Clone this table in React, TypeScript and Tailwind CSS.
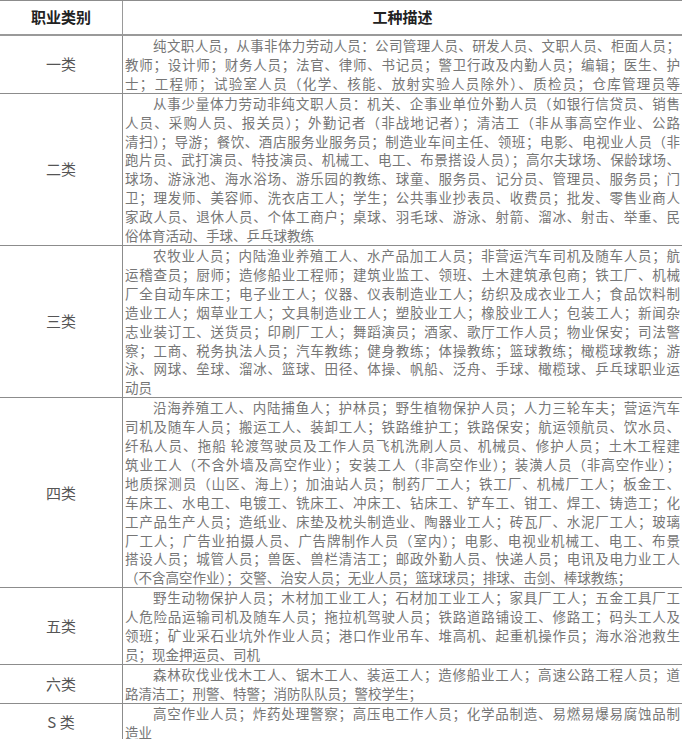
const rows: { label: string; lines: string[]; lastFull?: boolean }[] = [
  {
    label: "一类",
    lastFull: true,
    lines: [
      "纯文职人员，从事非体力劳动人员：公司管理人员、研发人员、文职人员、柜面人员；",
      "教师；设计师；财务人员；法官、律师、书记员；警卫行政及内勤人员；编辑；医生、护",
      "士；工程师；试验室人员（化学、核能、放射实验人员除外）、质检员；仓库管理员等",
    ],
  },
  {
    label: "二类",
    lines: [
      "从事少量体力劳动非纯文职人员：机关、企事业单位外勤人员（如银行信贷员、销售",
      "人员、采购人员、报关员）；外勤记者（非战地记者）；清洁工（非从事高空作业、公路",
      "清扫）；导游；餐饮、酒店服务业服务员；制造业车间主任、领班；电影、电视业人员（非",
      "跑片员、武打演员、特技演员、机械工、电工、布景搭设人员）；高尔夫球场、保龄球场、",
      "球场、游泳池、海水浴场、游乐园的教练、球童、服务员、记分员、管理员、服务员；门",
      "卫；理发师、美容师、洗衣店工人；学生；公共事业抄表员、收费员；批发、零售业商人",
      "家政人员、退休人员、个体工商户；桌球、羽毛球、游泳、射箭、溜冰、射击、举重、民",
      "俗体育活动、手球、乒乓球教练",
    ],
  },
  {
    label: "三类",
    lines: [
      "农牧业人员；内陆渔业养殖工人、水产品加工人员；非营运汽车司机及随车人员；航",
      "运稽查员；厨师；造修船业工程师；建筑业监工、领班、土木建筑承包商；铁工厂、机械",
      "厂全自动车床工；电子业工人；仪器、仪表制造业工人；纺织及成衣业工人；食品饮料制",
      "造业工人；烟草业工人；文具制造业工人；塑胶业工人；橡胶业工人；包装工人；新闻杂",
      "志业装订工、送货员；印刷厂工人；舞蹈演员；酒家、歌厅工作人员；物业保安；司法警",
      "察；工商、税务执法人员；汽车教练；健身教练；体操教练；篮球教练；橄榄球教练；游",
      "泳、网球、垒球、溜冰、篮球、田径、体操、帆船、泛舟、手球、橄榄球、乒乓球职业运",
      "动员",
    ],
  },
  {
    label: "四类",
    lines: [
      "沿海养殖工人、内陆捕鱼人；护林员；野生植物保护人员；人力三轮车夫；营运汽车",
      "司机及随车人员；搬运工人、装卸工人；铁路维护工；铁路保安；航运领航员、饮水员、",
      "纤私人员、拖船 轮渡驾驶员及工作人员飞机洗刷人员、机械员、修护人员；土木工程建",
      "筑业工人（不含外墙及高空作业）；安装工人（非高空作业）；装潢人员（非高空作业）；",
      "地质探测员（山区、海上）；加油站人员；制药厂工人；铁工厂、机械厂工人；板金工、",
      "车床工、水电工、电镀工、铣床工、冲床工、钻床工、铲车工、钳工、焊工、铸造工；化",
      "工产品生产人员；造纸业、床垫及枕头制造业、陶器业工人；砖瓦厂、水泥厂工人；玻璃",
      "厂工人；广告业拍摄人员、广告牌制作人员（室内）；电影、电视业机械工、电工、布景",
      "搭设人员；城管人员；兽医、兽栏清洁工；邮政外勤人员、快递人员；电讯及电力业工人",
      "（不含高空作业）；交警、治安人员；无业人员；篮球球员；排球、击剑、棒球教练；",
    ],
  },
  {
    label: "五类",
    lines: [
      "野生动物保护人员；木材加工业工人；石材加工业工人；家具厂工人；五金工具厂工",
      "人危险品运输司机及随车人员；拖拉机驾驶人员；铁路道路铺设工、修路工；码头工人及",
      "领班；矿业采石业坑外作业人员；港口作业吊车、堆高机、起重机操作员；海水浴池救生",
      "员；现金押运员、司机",
    ],
  },
  {
    label: "六类",
    lines: [
      "森林砍伐业伐木工人、锯木工人、装运工人；造修船业工人；高速公路工程人员；道",
      "路清洁工；刑警、特警；消防队队员；警校学生；",
    ],
  },
  {
    label: "S 类",
    lines: [
      "高空作业人员；炸药处理警察；高压电工作人员；化学品制造、易燃易爆易腐蚀品制",
      "造业",
    ],
  },
];

const font = "[font-family:'Noto_Sans_CJK_SC','Noto_Sans',sans-serif]";

export default function App() {
  return (
    <div className={`w-[682px] h-[739px] overflow-hidden bg-white ${font}`}>
      <div className="grid grid-cols-[123px_1fr] border-t border-[#8c8c8c]">
        {/* header */}
        <div className="h-[35px] flex items-center justify-center border-r border-b-2 border-[#9a9a9a] text-[15px] font-bold text-[#222]">
          职业类别
        </div>
        <div className="h-[35px] flex items-center justify-center border-b-2 border-[#9a9a9a] text-[15px] font-bold text-[#222]">
          工种描述
        </div>

        {rows.map((row) => (
          <div key={row.label} className="contents">
            <div className="flex items-center justify-center border-r border-b border-[#8c8c8c] text-[15px] text-[#555]">
              {row.label}
            </div>
            <div className="border-b border-[#8c8c8c] pl-[2px] pr-[2px] text-[13.5px] leading-[18.9px] text-[#767676]">
              {row.lines.map((line, i) => {
                const last = i === row.lines.length - 1 && !row.lastFull;
                return (
                  <div
                    key={i}
                    className={`whitespace-nowrap overflow-hidden ${
                      last ? "text-left" : "text-justify [text-align-last:justify]"
                    } ${i === 0 ? "indent-[28px]" : ""}`}
                  >
                    {line}
                  </div>
                );
              })}
            </div>
          </div>
        ))}
      </div>
    </div>
  );
}
